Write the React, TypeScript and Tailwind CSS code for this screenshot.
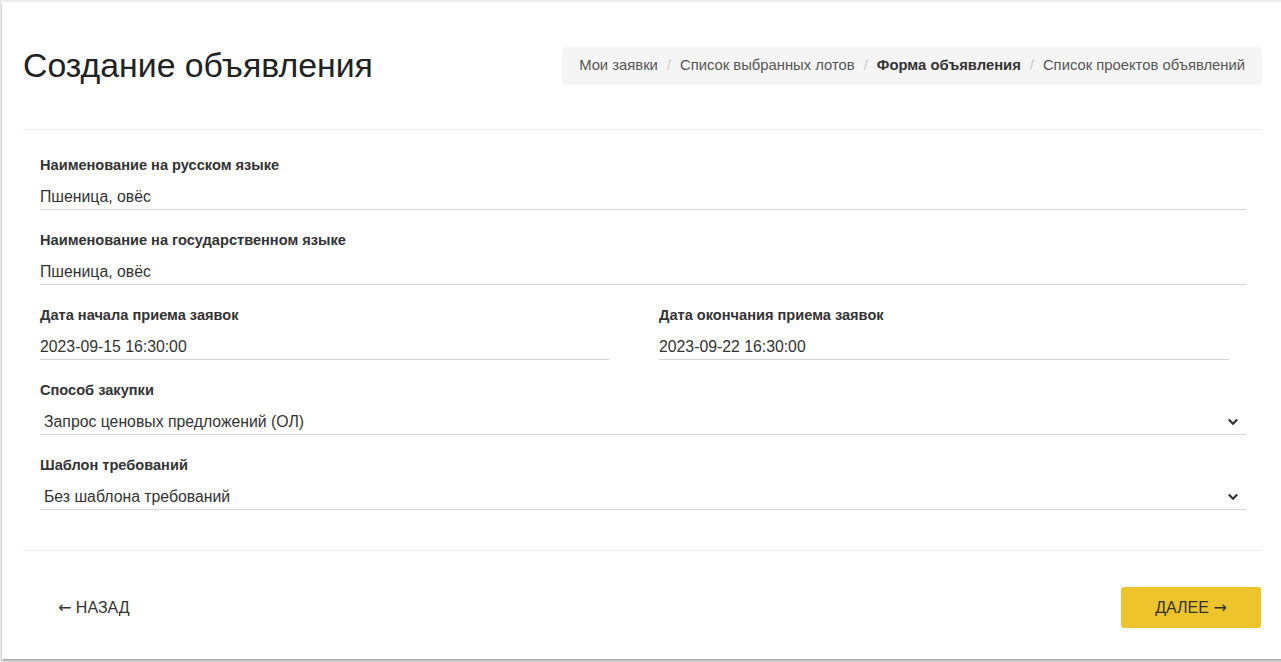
import React from 'react';

const font = { fontFamily: '"Liberation Sans", Arial, sans-serif' };
const arrowFont = { fontFamily: '"DejaVu Sans", sans-serif' };

function Chevron() {
  return (
    <svg width="12" height="8" viewBox="0 0 12 8" className="shrink-0">
      <path d="M1.8 1.5l4.2 4.2 4.2-4.2" fill="none" stroke="#333" strokeWidth="2.2" />
    </svg>
  );
}

function Field({ label, value }: { label: string; value: string }) {
  return (
    <div className="mb-[20px]">
      <div className="mb-[10px] text-[14.6px] font-bold leading-5 text-[#333]">{label}</div>
      <div className="h-[25px] border-b border-[#d4d4d4] text-[15.8px] leading-6 text-[#333]">{value}</div>
    </div>
  );
}

function SelectField({ label, value }: { label: string; value: string }) {
  return (
    <div className="mb-[20px]">
      <div className="mb-[10px] text-[14.6px] font-bold leading-5 text-[#333]">{label}</div>
      <div className="flex h-[25px] items-center justify-between border-b border-[#d4d4d4] pl-[4px] pr-[7px] text-[15.8px] leading-6 text-[#333]">
        <span>{value}</span>
        <Chevron />
      </div>
    </div>
  );
}

const crumbs = ['Мои заявки', 'Список выбранных лотов', 'Форма объявления', 'Список проектов объявлений'];

export default function App() {
  return (
    <div className="h-[662px] overflow-hidden bg-[#ececec] pl-[2px] pt-[2px]" style={font}>
      <div className="h-[657px] w-[1281px] bg-white px-[21px] shadow-[0_2px_2px_rgba(0,0,0,0.28)]">
        <div className="flex h-[128px] items-center justify-between border-b border-[#eee]">
          <h1 className="text-[33.8px] leading-none text-[#222]">Создание объявления</h1>
          <ol className="flex h-[38px] items-center rounded-[4px] bg-[#f5f5f5] px-[17px] text-[14.8px] text-[#555]">
            {crumbs.map((c, i) => (
              <li key={c} className="flex items-center">
                {i > 0 && <span className="px-[9px] text-[#ccc]">/</span>}
                <span className={i === 2 ? 'font-bold text-[#333]' : ''}>{c}</span>
              </li>
            ))}
          </ol>
        </div>

        <div className="border-b border-[#eee] pb-[20px] pl-[17px] pr-[16px] pt-[25px]">
          <Field label="Наименование на русском языке" value="Пшеница, овёс" />
          <Field label="Наименование на государственном языке" value="Пшеница, овёс" />
          <div className="grid grid-cols-[569px_570px] gap-x-[50px]">
            <Field label="Дата начала приема заявок" value="2023-09-15 16:30:00" />
            <Field label="Дата окончания приема заявок" value="2023-09-22 16:30:00" />
          </div>
          <SelectField label="Способ закупки" value="Запрос ценовых предложений (ОЛ)" />
          <SelectField label="Шаблон требований" value="Без шаблона требований" />
        </div>

        <div className="flex items-center justify-between pt-[36px]">
          <button className="ml-[35px] text-[16px] text-[#333]">
            <span style={arrowFont}>←</span> НАЗАД
          </button>
          <button className="mr-[1px] h-[41px] w-[140px] rounded-[3px] bg-[#eec42d] text-[16px] text-[#333]">
            ДАЛЕЕ <span style={arrowFont}>→</span>
          </button>
        </div>
      </div>
    </div>
  );
}
